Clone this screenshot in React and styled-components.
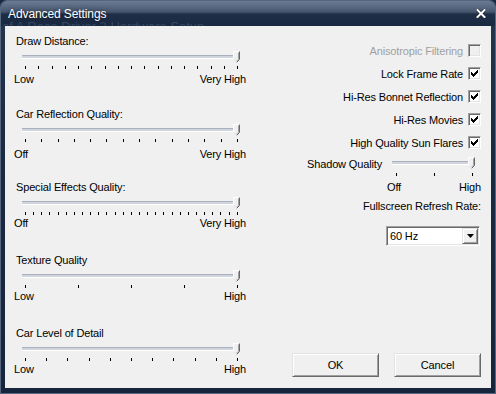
import React from 'react';
import styled, { createGlobalStyle } from 'styled-components';

const Global = createGlobalStyle`
  html, body { margin: 0; padding: 0; background: #1b2942; }
  body { font-family: "Liberation Sans", Arial, sans-serif; }
  #root { width: 496px; height: 394px; }
`;

const Window = styled.div`
  width: 496px;
  height: 394px;
  box-sizing: border-box;
  display: flex;
  flex-direction: column;
  background: linear-gradient(to bottom, #26364f 0%, #1b2a43 40%, #17253c 100%);
  border: 1px solid #56667e;
  border-radius: 7px 7px 0 0;
  overflow: hidden;
`;

const TitleBar = styled.div`
  position: relative;
  height: 25px;
  flex: none;
  display: flex;
  align-items: center;
  justify-content: space-between;
  padding: 0 9px 0 7px;
  overflow: hidden;
  background: linear-gradient(
    to bottom,
    #6a7b92 0%,
    #52637b 30%,
    #44556d 44%,
    #1f2f48 52%,
    #1a2841 100%
  );
`;

const GhostText = styled.span`
  position: absolute;
  left: 1px;
  top: 19px;
  font-size: 13px;
  line-height: 13px;
  color: rgba(110, 128, 156, 0.35);
  white-space: nowrap;
`;

const TitleText = styled.span`
  position: relative;
  color: #ffffff;
  font-size: 12px;
  line-height: 14px;
  letter-spacing: -0.1px;
  text-shadow: 0 0 4px rgba(0, 0, 0, 0.5);
`;

const CloseIcon = styled.svg`
  position: relative;
  display: block;
`;

const Client = styled.div`
  flex: 1;
  min-height: 0;
  margin: 0 4px 5px;
  box-sizing: border-box;
  background: #f0f0f0;
  display: grid;
  grid-template-columns: 241px 1fr;
  grid-template-rows: minmax(0, 1fr);
  padding: 0 10px 11px 0;
  font-size: 11px;
  letter-spacing: -0.15px;
  color: #000;
`;

const LeftCol = styled.div`
  padding: 9px 0 0 9px;
  display: grid;
  grid-template-rows: repeat(4, 73px) auto;
  align-content: start;
`;

const Group = styled.div`
  display: flex;
  flex-direction: column;
`;

const GroupTitle = styled.div`
  margin-left: 2px;
  line-height: 13px;
  height: 13px;
  white-space: nowrap;
`;

const TrackArea = styled.div`
  position: relative;
  height: 12px;
  margin: ${(p) => p.$m};
`;

const Groove = styled.div`
  margin-top: 4px;
  height: 4px;
  box-sizing: border-box;
  border-top: 1px solid #aab0bc;
  border-bottom: 1px solid #ffffff;
  background: #d0d4dd;
`;

const ThumbSvg = styled.svg`
  position: absolute;
  top: 0;
  display: block;
`;

const Ticks = styled.div`
  display: flex;
  justify-content: space-between;
  height: 3px;
  margin: ${(p) => p.$m};
`;

const Tick = styled.span`
  width: 1px;
  height: 3px;
  background: #000;
`;

const MinMax = styled.div`
  display: flex;
  justify-content: space-between;
  line-height: 13px;
  margin-top: ${(p) => p.$gap}px;
  white-space: nowrap;
`;

const RightCol = styled.div`
  display: flex;
  flex-direction: column;
  padding-top: 13px;
`;

const CheckRow = styled.div`
  height: 23px;
  display: flex;
  align-items: center;
  justify-content: flex-end;
  gap: 5px;
  color: ${(p) => (p.$disabled ? '#a0a0a0' : '#000')};
  white-space: nowrap;
`;

const Box = styled.span`
  width: 13px;
  height: 13px;
  box-sizing: border-box;
  display: flex;
  align-items: center;
  justify-content: center;
  border-style: solid;
  border-width: 1px;
  border-color: #a0a0a0 #ffffff #ffffff #a0a0a0;
  box-shadow: inset 1px 1px 0 #696969, inset -1px -1px 0 #e3e3e3;
  background: ${(p) => (p.$disabled ? '#f0f0f0' : '#ffffff')};
`;

const ShadowRow = styled.div`
  margin-top: 3px;
  display: flex;
  justify-content: flex-end;
  align-items: flex-start;
`;

const ShadowLabel = styled.span`
  margin-top: 1px;
  margin-right: 5px;
  line-height: 13px;
  white-space: nowrap;
`;

const SliderCol = styled.div`
  width: 94px;
  display: flex;
  flex-direction: column;
`;

const RefreshLabel = styled.div`
  margin-top: 6px;
  line-height: 13px;
  text-align: right;
  white-space: nowrap;
`;

const Combo = styled.div`
  align-self: flex-end;
  margin: 13px 1px 0 0;
  width: 94px;
  height: 20px;
  box-sizing: border-box;
  display: flex;
  align-items: center;
  border-style: solid;
  border-width: 1px;
  border-color: #a0a0a0 #ffffff #ffffff #a0a0a0;
  box-shadow: inset 1px 1px 0 #696969, inset -1px -1px 0 #e3e3e3;
  background: #ffffff;
  padding: 1px 1px 1px 3px;
`;

const ComboText = styled.span`
  flex: 1;
  line-height: 13px;
`;

const ComboButton = styled.span`
  width: 16px;
  height: 16px;
  box-sizing: border-box;
  display: flex;
  align-items: center;
  justify-content: center;
  background: #f0f0f0;
  border-style: solid;
  border-width: 1px;
  border-color: #e3e3e3 #696969 #696969 #e3e3e3;
  box-shadow: inset 1px 1px 0 #ffffff, inset -1px -1px 0 #a0a0a0;
`;

const ButtonRow = styled.div`
  margin-top: auto;
  display: flex;
  justify-content: flex-end;
  gap: 15px;
`;

const Button = styled.button`
  width: 87px;
  height: 24px;
  box-sizing: border-box;
  padding: 0;
  font-family: "Liberation Sans", Arial, sans-serif;
  font-size: 11px;
  letter-spacing: -0.15px;
  color: #000;
  background: #f0f0f0;
  border-style: solid;
  border-width: 1px;
  border-color: #e3e3e3 #696969 #696969 #e3e3e3;
  box-shadow: inset 1px 1px 0 #ffffff, inset -1px -1px 0 #a0a0a0;
`;

function Thumb({ pct, width }) {
  return (
    <ThumbSvg
      width="7"
      height="12"
      viewBox="0 0 7 12"
      style={{ left: `calc(${pct}% - ${(pct / 100) * width}px)` }}
    >
      <polygon points="0,0 7,0 7,8.5 3.5,12 0,8.5" fill="#f0f0f0" />
      <polyline points="0.5,8.5 0.5,0.5 6.5,0.5" fill="none" stroke="#ffffff" strokeWidth="1" />
      <polyline points="6.5,0.5 6.5,8.5 3.5,11.5" fill="none" stroke="#696969" strokeWidth="1" />
      <polyline points="5.5,1.5 5.5,8.2 3.5,10.2" fill="none" stroke="#a0a0a0" strokeWidth="1" />
      <polyline points="0.5,8.5 3.5,11.5" fill="none" stroke="#e3e3e3" strokeWidth="1" />
    </ThumbSvg>
  );
}

function TickRow({ count, m }) {
  return (
    <Ticks $m={m}>
      {Array.from({ length: count }, (_, i) => (
        <Tick key={i} />
      ))}
    </Ticks>
  );
}

function CheckMark() {
  return (
    <svg width="7" height="7" viewBox="0 0 7 7" style={{ display: 'block' }}>
      <path
        d="M0 2h1v1h1v1h1V3h1V2h1V1h1V0h1v3H6v1H5v1H4v1H3v1H2V6H1V5H0z"
        fill="#000"
      />
    </svg>
  );
}

function Check({ label, checked, disabled }) {
  return (
    <CheckRow $disabled={disabled}>
      <span>{label}</span>
      <Box $disabled={disabled}>{checked && <CheckMark />}</Box>
    </CheckRow>
  );
}

const sliders = [
  { title: 'Draw Distance:', ticks: 17, min: 'Low', max: 'Very High', gap: 4 },
  { title: 'Car Reflection Quality:', ticks: 14, min: 'Off', max: 'Very High', gap: 6 },
  { title: 'Special Effects Quality:', ticks: 27, min: 'Off', max: 'Very High', gap: 2 },
  { title: 'Texture Quality', ticks: 5, min: 'Low', max: 'High', gap: 2 },
  { title: 'Car Level of Detail', ticks: 11, min: 'Low', max: 'High', gap: 2 },
];

const checks = [
  { label: 'Anisotropic Filtering', checked: false, disabled: true },
  { label: 'Lock Frame Rate', checked: true },
  { label: 'Hi-Res Bonnet Reflection', checked: true },
  { label: 'Hi-Res Movies', checked: true },
  { label: 'High Quality Sun Flares', checked: true },
];

export default function App() {
  return (
    <>
      <Global />
      <Window>
        <TitleBar>
          <GhostText>of A Race Driver 2 Hardware Setup</GhostText>
          <TitleText>Advanced Settings</TitleText>
          <CloseIcon width="10" height="9" viewBox="0 0 10 9">
            <path d="M1.5 1 L8.5 8 M8.5 1 L1.5 8" stroke="#1a2233" strokeWidth="3.4" strokeLinecap="square" />
            <path d="M1.5 1 L8.5 8 M8.5 1 L1.5 8" stroke="#ffffff" strokeWidth="2" strokeLinecap="square" />
          </CloseIcon>
        </TitleBar>
        <Client>
          <LeftCol>
            {sliders.map((s) => (
              <Group key={s.title}>
                <GroupTitle>{s.title}</GroupTitle>
                <TrackArea $m="3px 6px 0 8px">
                  <Groove />
                  <Thumb pct={100} width={7} />
                </TrackArea>
                <TickRow count={s.ticks} m="3px 8px 0 11px" />
                <MinMax $gap={s.gap}>
                  <span>{s.min}</span>
                  <span>{s.max}</span>
                </MinMax>
              </Group>
            ))}
          </LeftCol>
          <RightCol>
            {checks.map((c) => (
              <Check key={c.label} {...c} />
            ))}
            <ShadowRow>
              <ShadowLabel>Shadow Quality</ShadowLabel>
              <SliderCol>
                <TrackArea $m="0 6px 0 5px">
                  <Groove />
                  <Thumb pct={100} width={7} />
                </TrackArea>
                <TickRow count={3} m="4px 8px 0 9px" />
                <MinMax $gap={5}>
                  <span>Off</span>
                  <span>High</span>
                </MinMax>
              </SliderCol>
            </ShadowRow>
            <RefreshLabel>Fullscreen Refresh Rate:</RefreshLabel>
            <Combo>
              <ComboText>60 Hz</ComboText>
              <ComboButton>
                <svg width="7" height="4" viewBox="0 0 7 4" style={{ display: 'block' }}>
                  <polygon points="0,0 7,0 3.5,4" fill="#000" />
                </svg>
              </ComboButton>
            </Combo>
            <ButtonRow>
              <Button>OK</Button>
              <Button>Cancel</Button>
            </ButtonRow>
          </RightCol>
        </Client>
      </Window>
    </>
  );
}
